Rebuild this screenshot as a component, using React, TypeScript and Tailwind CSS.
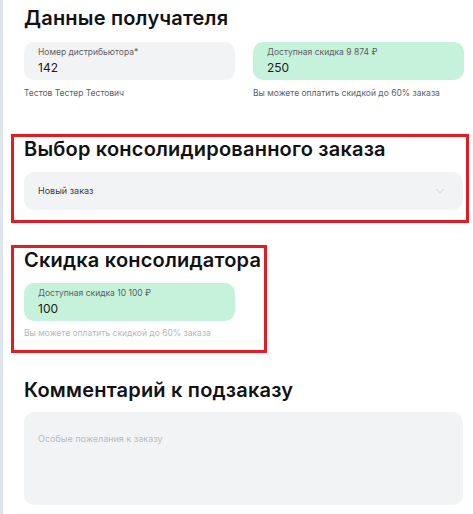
import { ChevronDown } from "lucide-react";

function Field({
  label,
  value,
  green,
}: {
  label: string;
  value: string;
  green?: boolean;
}) {
  return (
    <div
      className={`h-[38px] w-[211px] rounded-[10px] pl-[14px] pt-[4px] flex flex-col ${
        green ? "bg-[#c6f1da]" : "bg-[#f2f3f5]"
      }`}
    >
      <span className="text-[8.5px] leading-[12px] text-[#5b5f66]">{label}</span>
      <span className="text-[12px] leading-[16px] text-[#1b1d21] mt-[2px]">{value}</span>
    </div>
  );
}

function Heading({ children }: { children: React.ReactNode }) {
  return (
    <h2 className="text-[20px] leading-[24px] font-semibold tracking-[0.01em] whitespace-nowrap text-[#111214]">
      {children}
    </h2>
  );
}

export default function App() {
  return (
    <div
      className="w-[473px] h-[514px] bg-white border-l-[3px] border-[#dfe5ee] pl-[21px] pr-[10px] pt-[6px] overflow-hidden"
      style={{ fontFamily: "Inter, 'Noto Sans', sans-serif" }}
    >
      {/* recipient */}
      <Heading>Данные получателя</Heading>
      <div className="mt-[12px] flex gap-[18px]">
        <div className="flex flex-col">
          <Field label="Номер дистрибьютора*" value="142" />
          <span className="mt-[7px] text-[8.5px] leading-[12px] text-[#5b5f66]">
            Тестов Тестер Тестович
          </span>
        </div>
        <div className="flex flex-col">
          <Field label="Доступная скидка 9 874 ₽" value="250" green />
          <span className="mt-[7px] text-[8.5px] leading-[12px] text-[#5b5f66]">
            Вы можете оплатить скидкой до 60% заказа
          </span>
        </div>
      </div>

      {/* consolidated order */}
      <div className="mt-[35px] -ml-[13px] -mr-[6px] border-[3px] border-[#e31b23] pl-[10px] pr-[3px] pb-[10px]">
        <Heading>Выбор консолидированного заказа</Heading>
        <div className="mt-[11px] h-[38px] rounded-[10px] bg-[#f2f3f5] flex items-center justify-between pl-[14px] pr-[16px]">
          <span className="text-[9px] text-[#3a3d42]">Новый заказ</span>
          <ChevronDown className="w-[14px] h-[14px] text-[#c4c7cc]" strokeWidth={1.5} />
        </div>
      </div>

      {/* consolidator discount */}
      <div className="mt-[22px] -ml-[13px] w-[256px] border-[3px] border-[#e31b23] pl-[10px] pb-[11px]">
        <Heading>Скидка консолидатора</Heading>
        <div className="mt-[11px]">
          <Field label="Доступная скидка 10 100 ₽" value="100" green />
        </div>
        <div className="mt-[6px] text-[8.5px] leading-[12px] text-[#b4b8be]">
          Вы можете оплатить скидкой до 60% заказа
        </div>
      </div>

      {/* comment */}
      <div className="mt-[25px]">
        <Heading>Комментарий к подзаказу</Heading>
        <div className="mt-[10px] h-[93px] rounded-[10px] bg-[#f2f3f5] pl-[14px] pt-[12px]">
          <span className="text-[9px] text-[#b9bcc2]">Особые пожелания к заказу</span>
        </div>
      </div>
    </div>
  );
}
